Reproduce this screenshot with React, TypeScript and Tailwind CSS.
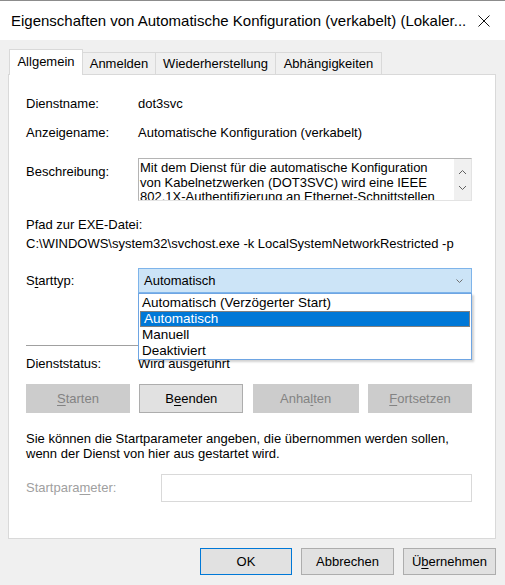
import type { ReactNode } from 'react';

const TABS = [
  { label: 'Allgemein', w: 'w-[74px]' },
  { label: 'Anmelden', w: 'w-[73px]' },
  { label: 'Wiederherstellung', w: 'w-[120px]' },
  { label: 'Abhängigkeiten', w: 'w-[106px]' },
];

const START_TYPES = [
  'Automatisch (Verzögerter Start)',
  'Automatisch',
  'Manuell',
  'Deaktiviert',
];

// accelerator letter, as Windows draws it
function Key({ children }: { children: ReactNode }) {
  return <span className="underline decoration-1 underline-offset-[2px]">{children}</span>;
}

function ActionButton({
  children,
  disabled,
  width,
}: {
  children: ReactNode;
  disabled?: boolean;
  width: string;
}) {
  return (
    <div
      className={
        'flex h-[29px] items-center justify-center border ' +
        width +
        (disabled
          ? ' border-[#cccccc] bg-[#cccccc] text-[#838383]'
          : ' border-[#adadad] bg-[#e1e1e1] text-black')
      }
    >
      {children}
    </div>
  );
}

function DialogButton({
  children,
  primary,
  width,
}: {
  children: ReactNode;
  primary?: boolean;
  width: string;
}) {
  return (
    <div
      className={
        'flex h-[27px] items-center justify-center border bg-[#e1e1e1] ' +
        width +
        (primary ? ' border-[#0078d7]' : ' border-[#adadad]')
      }
    >
      {children}
    </div>
  );
}

function Chevron({ up }: { up?: boolean }) {
  return (
    <svg width="9" height="6" viewBox="0 0 9 6" className="block">
      <path
        d={up ? 'M1 5 L4.5 1.5 L8 5' : 'M1 1 L4.5 4.5 L8 1'}
        fill="none"
        stroke="#606060"
        strokeWidth="1"
      />
    </svg>
  );
}

export default function App() {
  return (
    <div
      className="relative flex h-[585px] w-[505px] flex-col overflow-hidden border-t border-[#8c8c8c] bg-[#f0f0f0] text-[13px] leading-[16px] text-black"
      style={{ fontFamily: '"Liberation Sans", Arial, sans-serif' }}
    >
      {/* title bar */}
      <div className="flex h-[39px] shrink-0 items-center justify-between bg-white pl-[11px] pr-[15px]">
        <span className="whitespace-nowrap text-[15px] leading-[20px] text-black">
          Eigenschaften von Automatische Konfiguration (verkabelt) (Lokaler...
        </span>
        <svg width="12" height="12" viewBox="0 0 12 12" className="shrink-0">
          <path d="M0.5 0.5 L11.5 11.5 M11.5 0.5 L0.5 11.5" stroke="#111" strokeWidth="1" />
        </svg>
      </div>

      <div className="flex flex-1 flex-col pl-[8px] pr-[9px] pt-[9px]">
        {/* tabs */}
        <div className="flex h-[25px] items-end pl-[1px]">
          {TABS.map((t, i) =>
            i === 0 ? (
              <div
                key={t.label}
                className={
                  'relative z-10 -mb-px flex h-[26px] items-start justify-center border border-b-0 border-[#d9d9d9] bg-white pt-[4px] ' +
                  t.w
                }
              >
                {t.label}
              </div>
            ) : (
              <div
                key={t.label}
                className={
                  'flex h-[22px] items-center justify-center border border-b-0 border-l-0 border-[#d9d9d9] bg-[#f0f0f0] pt-[1px] ' +
                  t.w
                }
              >
                {t.label}
              </div>
            ),
          )}
        </div>

        {/* Allgemein page */}
        <div className="relative flex h-[465px] flex-col border border-[#d9d9d9] bg-white pl-[17px] pr-[23px]">
          <div className="mt-[21px] flex">
            <span className="w-[112px] shrink-0">Dienstname:</span>
            <span>dot3svc</span>
          </div>
          <div className="mt-[13px] flex">
            <span className="w-[112px] shrink-0">Anzeigename:</span>
            <span>Automatische Konfiguration (verkabelt)</span>
          </div>

          <div className="mt-[17px] flex">
            <span className="w-[112px] shrink-0 pt-[6px]">Beschreibung:</span>
            <div className="flex h-[43px] flex-1 border border-[#b4b4b4] border-r-[#e3e3e3] border-b-[#e3e3e3]">
              <div className="flex-1 overflow-hidden pl-[1px] pt-[2px] leading-[14.5px]">
                Mit dem Dienst für die automatische Konfiguration
                <br />
                von Kabelnetzwerken (DOT3SVC) wird eine IEEE
                <br />
                802.1X-Authentifizierung an Ethernet-Schnittstellen
              </div>
              <div className="flex w-[17px] flex-col items-center justify-center gap-[10px] bg-[#f0f0f0]">
                <Chevron up />
                <Chevron />
              </div>
            </div>
          </div>

          <div className="mt-[16px]">Pfad zur EXE-Datei:</div>
          <div className="mt-[3px]">C:\WINDOWS\system32\svchost.exe -k LocalSystemNetworkRestricted -p</div>

          <div className="mt-[16px] flex">
            <span className="w-[112px] shrink-0 pt-[5px]">
              S<Key>t</Key>arttyp:
            </span>
            <div className="flex h-[25px] flex-1 items-center justify-between border border-[#7eb4ea] bg-[#cce4f7] pl-[5px] pr-[8px]">
              <span>Automatisch</span>
              <svg width="7" height="4" viewBox="0 0 7 4">
                <path d="M0.5 0.5 L3.5 3.5 L6.5 0.5" fill="none" stroke="#707070" strokeWidth="1" />
              </svg>
            </div>
          </div>

          <div className="mt-[52px] h-px bg-[#a0a0a0]" />

          <div className="mt-[10px] flex">
            <span className="w-[112px] shrink-0">Dienststatus:</span>
            <span>Wird ausgeführt</span>
          </div>

          <div className="mt-[12px] flex justify-between">
            <ActionButton disabled width="w-[104px]">
              <span>
                <Key>S</Key>tarten
              </span>
            </ActionButton>
            <ActionButton width="w-[104px]">
              <span>
                B<Key>e</Key>enden
              </span>
            </ActionButton>
            <ActionButton disabled width="w-[106px]">
              <span>
                Anha<Key>l</Key>ten
              </span>
            </ActionButton>
            <ActionButton disabled width="w-[104px]">
              <span>
                <Key>F</Key>ortsetzen
              </span>
            </ActionButton>
          </div>

          <p className="mt-[18px] leading-[15px]">
            Sie können die Startparameter angeben, die übernommen werden sollen,
            <br />
            wenn der Dienst von hier aus gestartet wird.
          </p>

          <div className="mt-[13px] flex items-center">
            <span className="w-[135px] shrink-0 text-[#a0a0a0]">
              Startpara<Key>m</Key>eter:
            </span>
            <div className="h-[28px] flex-1 border border-[#d9d9d9] bg-white" />
          </div>

          {/* open start type list */}
          <div className="absolute left-[129px] top-[218px] z-20 flex h-[67px] w-[334px] flex-col border border-[#6ea5e3] bg-white pt-px shadow-[2px_2px_2px_rgba(0,0,0,0.18)]">
            {START_TYPES.map((s, i) => (
              <div
                key={s}
                className={
                  'flex h-[16px] items-center pl-[3px] text-[13.5px] ' +
                  (i === 1 ? 'mx-px border border-[#808080] bg-[#0078d7] pl-[2px] text-white' : '')
                }
              >
                {s}
              </div>
            ))}
          </div>
        </div>

        {/* dialog buttons */}
        <div className="mt-[9px] flex justify-end gap-[9px]">
          <DialogButton primary width="w-[92px]">
            OK
          </DialogButton>
          <DialogButton width="w-[93px]">Abbrechen</DialogButton>
          <DialogButton width="w-[93px]">
            <span>
              Ü<Key>b</Key>ernehmen
            </span>
          </DialogButton>
        </div>
      </div>
    </div>
  );
}
